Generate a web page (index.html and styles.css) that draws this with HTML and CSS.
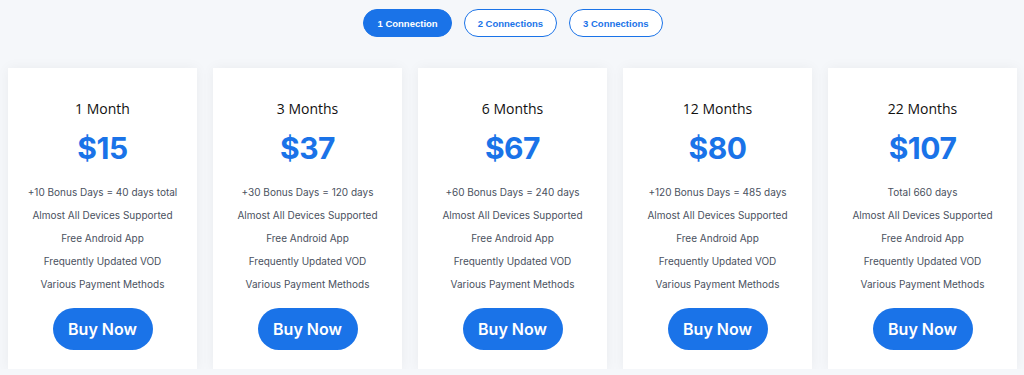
FILE: index.html
```html
<!DOCTYPE html>
<html>
<head>
<meta charset="utf-8">
<link rel="stylesheet" href="styles.css">
</head>
<body>
<div class="tabs">
  <button class="tab active">1 Connection</button>
  <button class="tab">2 Connections</button>
  <button class="tab">3 Connections</button>
</div>
<div class="plans">
  <div class="card">
    <h3 class="title">1 Month</h3>
    <div class="price">$15</div>
    <ul class="features">
      <li>+10 Bonus Days = 40 days total</li>
      <li>Almost All Devices Supported</li>
      <li>Free Android App</li>
      <li>Frequently Updated VOD</li>
      <li>Various Payment Methods</li>
    </ul>
    <a class="buy">Buy Now</a>
  </div>
  <div class="card">
    <h3 class="title">3 Months</h3>
    <div class="price">$37</div>
    <ul class="features">
      <li>+30 Bonus Days = 120 days</li>
      <li>Almost All Devices Supported</li>
      <li>Free Android App</li>
      <li>Frequently Updated VOD</li>
      <li>Various Payment Methods</li>
    </ul>
    <a class="buy">Buy Now</a>
  </div>
  <div class="card">
    <h3 class="title">6 Months</h3>
    <div class="price">$67</div>
    <ul class="features">
      <li>+60 Bonus Days = 240 days</li>
      <li>Almost All Devices Supported</li>
      <li>Free Android App</li>
      <li>Frequently Updated VOD</li>
      <li>Various Payment Methods</li>
    </ul>
    <a class="buy">Buy Now</a>
  </div>
  <div class="card">
    <h3 class="title">12 Months</h3>
    <div class="price">$80</div>
    <ul class="features">
      <li>+120 Bonus Days = 485 days</li>
      <li>Almost All Devices Supported</li>
      <li>Free Android App</li>
      <li>Frequently Updated VOD</li>
      <li>Various Payment Methods</li>
    </ul>
    <a class="buy">Buy Now</a>
  </div>
  <div class="card">
    <h3 class="title">22 Months</h3>
    <div class="price">$107</div>
    <ul class="features">
      <li>Total 660 days</li>
      <li>Almost All Devices Supported</li>
      <li>Free Android App</li>
      <li>Frequently Updated VOD</li>
      <li>Various Payment Methods</li>
    </ul>
    <a class="buy">Buy Now</a>
  </div>
</div>
</body>
</html>
```

FILE: styles.css
```css
* { box-sizing: border-box; }
html, body { margin: 0; padding: 0; }
body {
  background: #f5f7fa;
  font-family: Inter, "Liberation Sans", sans-serif;
  padding: 9px 7px 0 8px;
}
.tabs {
  display: flex;
  justify-content: center;
  gap: 12px;
  padding-left: 1px;
}
.tab {
  height: 28px;
  padding: 0 13px;
  border-radius: 14px;
  border: 1.5px solid #1a73e8;
  background: #fff;
  color: #1a73e8;
  font-family: "Liberation Sans", Arial, sans-serif;
  font-weight: 700;
  font-size: 9.5px;
  cursor: pointer;
}
.tab.active {
  background: #1a73e8;
  color: #fff;
  padding: 0 13px;
}
.plans {
  display: grid;
  grid-template-columns: repeat(5, 1fr);
  gap: 16px;
  margin-top: 31px;
}
.card {
  background: #fff;
  height: 301px;
  box-shadow: 0 0 12px rgba(0, 0, 0, 0.05);
  display: flex;
  flex-direction: column;
  align-items: center;
  padding-top: 32px;
}
.title {
  margin: 0;
  font-family: "Open Sans", sans-serif;
  font-weight: 500;
  font-size: 14px;
  line-height: 18px;
  color: #111;
}
.price {
  margin-top: 12px;
  font-family: Inter, sans-serif;
  font-weight: 700;
  font-size: 30px;
  line-height: 36px;
  color: #1a73e8;
  letter-spacing: -0.5px;
}
.features {
  list-style: none;
  margin: 15px 0 0;
  padding: 0;
  text-align: center;
  font-size: 10px;
  line-height: 23px;
  color: #4a5160;
}
.buy {
  margin-top: 12px;
  width: 100px;
  height: 42px;
  border-radius: 21px;
  background: #1a73e8;
  color: #fff;
  font-family: Inter, sans-serif;
  font-weight: 600;
  font-size: 16px;
  display: flex;
  align-items: center;
  justify-content: center;
}
```
